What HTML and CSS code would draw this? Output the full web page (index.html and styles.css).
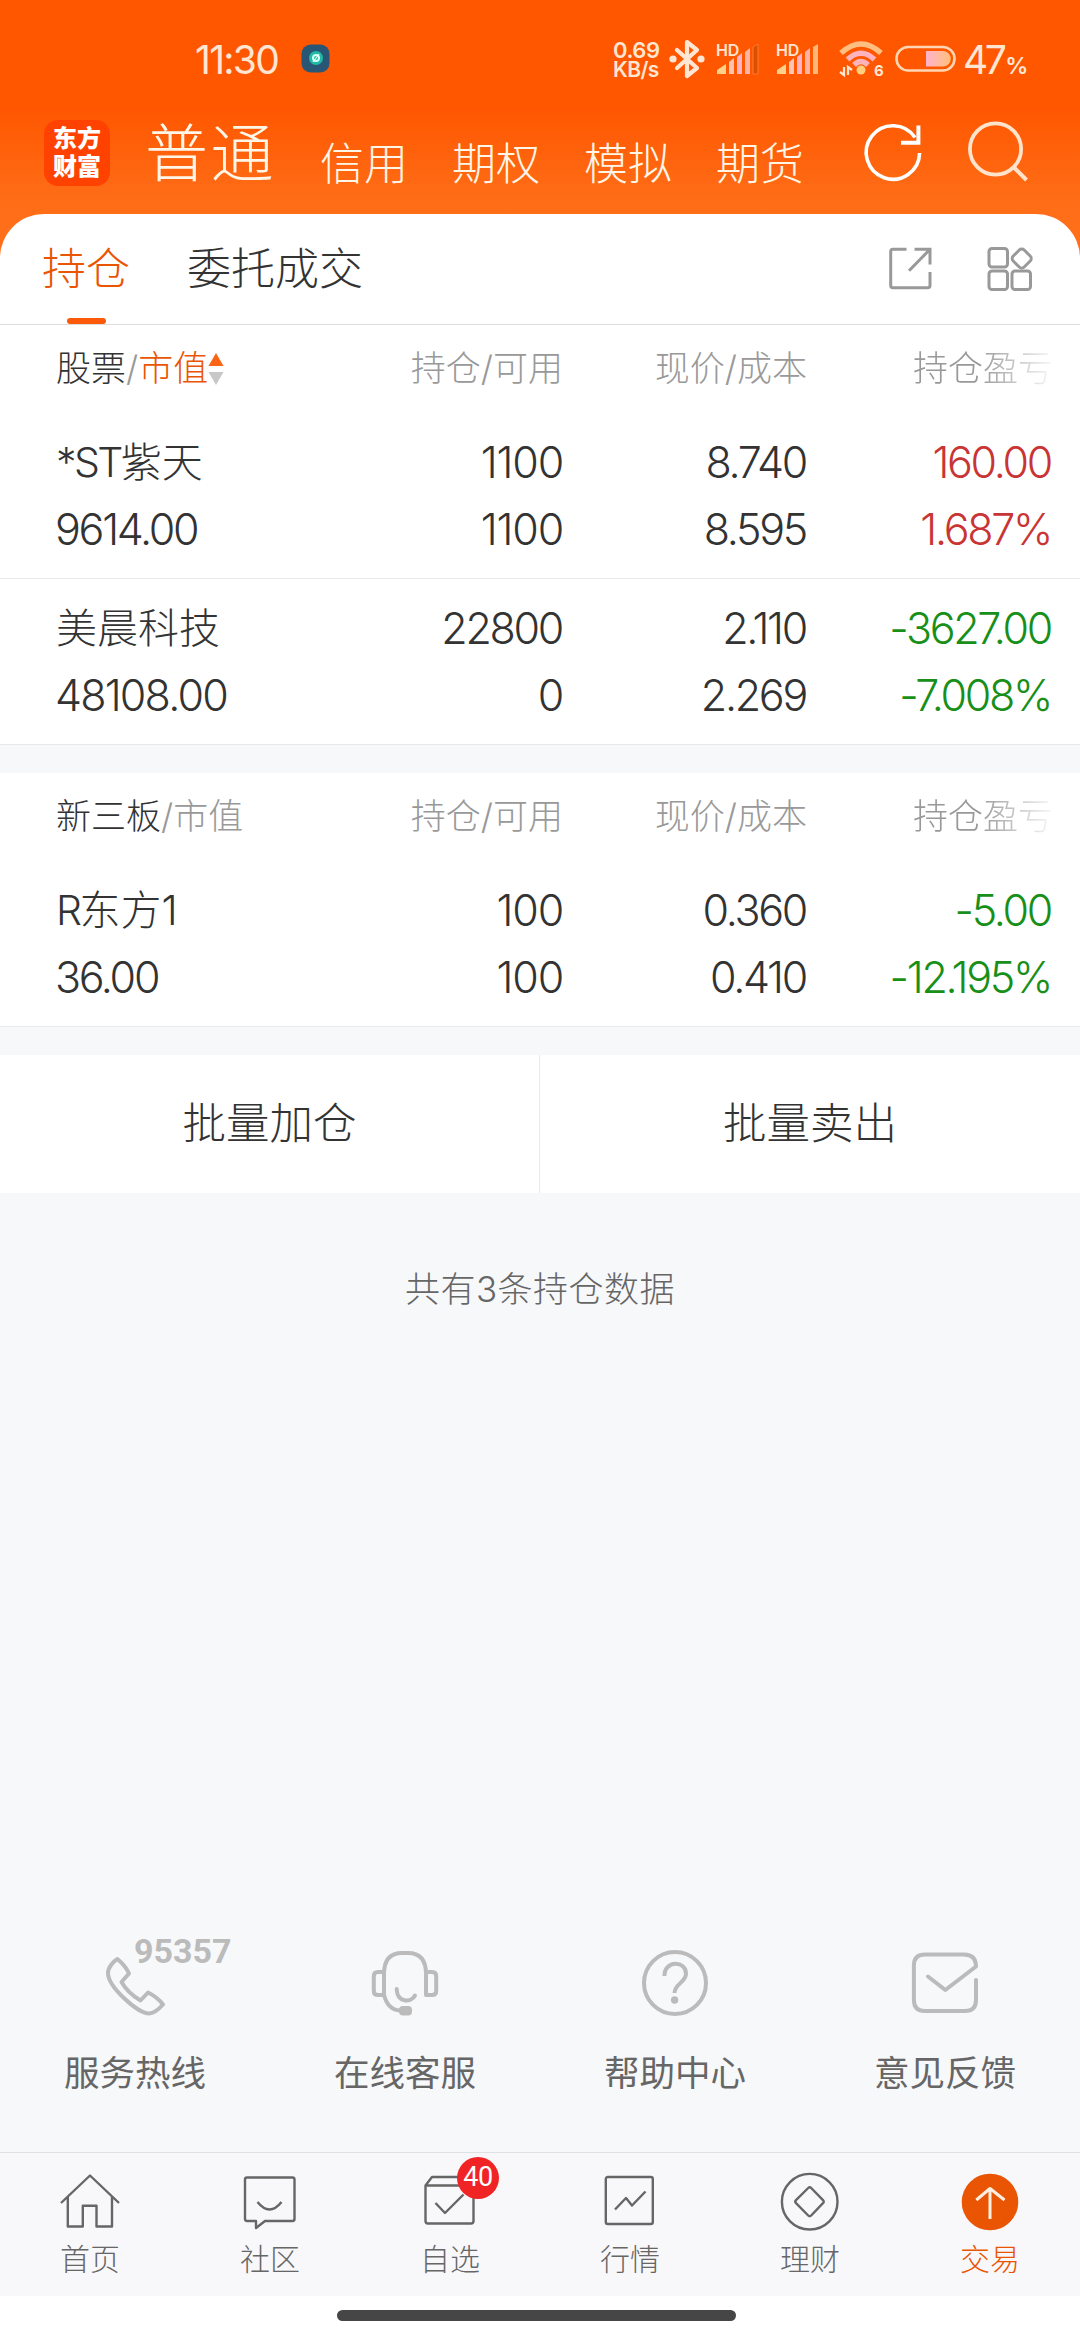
FILE: index.html
```html
<!DOCTYPE html>
<html lang="zh-CN">
<head>
<meta charset="utf-8">
<title>持仓</title>
<link rel="stylesheet" href="styles.css">
</head>
<body>
<div class="screen">
  <header class="top">
    <div class="status">
      <span class="time">11:30</span>
      <svg class="app-dot" viewBox="0 0 30 30" width="30" height="30"><rect x=".5" y=".5" width="28" height="28" rx="9" fill="#2a5675"/><circle cx="15" cy="14" r="7" fill="#1fb9a5"/><circle cx="15" cy="14" r="3" fill="none" stroke="#d8fff6" stroke-width="2"/><path d="M12 18l6-8" stroke="#d8fff6" stroke-width="1.2"/></svg>
      <span class="speed"><b>0.69</b><b class="unit">KB/s</b></span>
      <svg class="bt" viewBox="0 0 36 40" width="36" height="40"><path d="M8 11l20 18-10 8V3l10 8L8 29" fill="none" stroke="#ffe6d3" stroke-width="4.2" stroke-linejoin="round" stroke-linecap="round"/><circle cx="4" cy="20" r="3.6" fill="#ffe6d3"/><circle cx="32" cy="20" r="3.6" fill="#ffe6d3"/></svg>
      <span class="signal"><i>HD</i><svg viewBox="0 0 44 32" width="44" height="32"><path d="M1 31v-4l9-6v10z" fill="#ffd08a"/><path d="M13 31V19l5-4v16z" fill="#ffc3b4"/><path d="M21 31V14l5-4v21z" fill="#ffb3c4"/><path d="M29 31V9l5-4v26z" fill="#ffb3a4"/><path d="M37 31V4l5-3v30z" fill="#d85000" stroke="#ff7a30"/></svg></span>
      <span class="signal second"><i>HD</i><svg viewBox="0 0 44 32" width="44" height="32"><path d="M1 31v-4l9-6v10z" fill="#ffd08a"/><path d="M13 31V19l5-4v16z" fill="#ffc3b4"/><path d="M21 31V14l5-4v21z" fill="#ffb3c4"/><path d="M29 31V9l5-4v26z" fill="#ffb3a4"/><path d="M37 31V4l5-3v30z" fill="#ffb878"/></svg></span>
      <svg class="wifi" viewBox="0 0 44 36" width="44" height="36"><g fill="none" stroke-width="5.4"><path d="M2 12Q22-6 42 12" stroke="#ffbf80"/><path d="M8.500 18.500Q22 6 35.500 18.500" stroke="#ffb3c0"/><path d="M15 24Q22 17 29 24" stroke="#ffb3b8"/></g><circle cx="22" cy="29" r="4.500" fill="#ffcf80"/><path d="M5 26v8l-4-3M9 34v-8l4 3" fill="none" stroke="#ffe6d3" stroke-width="2.200"/><text x="35" y="35" class="wifi-gen">6</text></svg>
      <svg class="battery" viewBox="0 0 62 28" width="62" height="28"><defs><linearGradient id="charge"><stop offset="0" stop-color="#ffb3cc"/><stop offset="1" stop-color="#ffc078"/></linearGradient></defs><rect x="1.500" y="2" width="58" height="23.500" rx="11.700" fill="none" stroke="#ffd6b4" stroke-width="2.600"/><path d="M31 6h17a7.700 7.700 0 0 1 0 15.500H31z" fill="url(#charge)"/></svg>
      <span class="level">47<small>%</small></span>
    </div>
    <nav class="accounts">
      <span class="logo"><b>东方</b><b>财富</b></span>
      <span class="account current">普通</span>
      <span class="account">信用</span>
      <span class="account">期权</span>
      <span class="account">模拟</span>
      <span class="account">期货</span>
      <svg class="refresh" viewBox="0 0 60 60" width="60" height="60"><path d="M56.600 31A26.700 26.700 0 1 1 52 15.500" fill="none" stroke="#fff" stroke-width="3.600"/><path d="M55.400 3.500v17.200H38" fill="none" stroke="#fff" stroke-width="4"/></svg>
      <svg class="search" viewBox="0 0 62 62" width="62" height="62"><circle cx="28.500" cy="29" r="25.600" fill="none" stroke="#ffe3cc" stroke-width="3.800"/><path d="M46.500 47l13 13" stroke="#ffe3cc" stroke-width="4"/></svg>
    </nav>
  </header>

  <main class="panel">
    <div class="tabs">
      <span class="tab active">持仓</span>
      <span class="tab">委托成交</span>
      <svg class="share" viewBox="0 0 44 46" width="44" height="46"><path d="M17.500 3.300H4q-2.300 0-2.300 2.300V39.500q0 2.300 2.300 2.300H38.700q2.300 0 2.300-2.300V26M25.500 3.300H41V18.500M41 3.300L20 24.700" fill="none" stroke="#999" stroke-width="3"/></svg>
      <svg class="tiles" viewBox="0 0 46 46" width="46" height="46"><g fill="none" stroke="#999" stroke-width="3"><rect x="2" y="2.500" width="18.500" height="18.500" rx="3"/><rect x="2" y="25" width="18.500" height="18.500" rx="3"/><rect x="25" y="25" width="18.500" height="18.500" rx="3"/><rect x="27" y="4.800" width="15.500" height="15.500" rx="3.500" transform="rotate(45 34.750 12.500)"/></g></svg>
    </div>

    <section class="holdings">
      <div class="head">
        <span class="name"><em>股票</em>/<strong>市值</strong><svg class="sort" viewBox="0 0 16 32" width="16" height="32"><path d="M8 0l7.500 13H.5z" fill="#fa6414"/><path d="M8 32l7.500-13H.5z" fill="#c8c8c8"/></svg></span>
        <span>持仓/可用</span><span>现价/成本</span><span class="fade">持仓盈亏</span>
      </div>
      <div class="row">
        <div class="name"><p><i class="latin">*ST</i>紫天</p><p class="num">9614.00</p></div>
        <div class="num ones"><p>1100</p><p>1100</p></div>
        <div class="num"><p>8.740</p><p>8.595</p></div>
        <div class="num up"><p>160.00</p><p>1.687%</p></div>
      </div>
      <div class="row">
        <div class="name"><p>美晨科技</p><p class="num wide">48108.00</p></div>
        <div class="num"><p>22800</p><p>0</p></div>
        <div class="num"><p>2.110</p><p>2.269</p></div>
        <div class="num down"><p>-3627.00</p><p>-7.008%</p></div>
      </div>
    </section>

    <section class="holdings">
      <div class="head">
        <span class="name"><em>新三板</em>/市值</span>
        <span>持仓/可用</span><span>现价/成本</span><span class="fade">持仓盈亏</span>
      </div>
      <div class="row">
        <div class="name"><p><i class="latin">R</i>东方<i class="latin">1</i></p><p class="num">36.00</p></div>
        <div class="num ones"><p>100</p><p>100</p></div>
        <div class="num"><p>0.360</p><p>0.410</p></div>
        <div class="num down"><p>-5.00</p><p>-12.195%</p></div>
      </div>
    </section>

    <div class="batch"><span>批量加仓</span><span>批量卖出</span></div>
    <p class="total">共有3条持仓数据</p>
  </main>

  <section class="services">
    <div class="service">
      <svg viewBox="0 0 66 66" width="66" height="66"><path d="M15.400 9C19 12 24.500 18 27 23.500L19.500 32C24 40 31 46 38.500 50.500L46 42.500C51 45 57 49 61 54.500C57 59 52 63.500 47 63.500C36 63.500 6 37 6 23C6 17 12 11 15.400 9Z"/></svg>
      <b class="hotline">95357</b>
      <span>服务热线</span>
    </div>
    <div class="service">
      <svg viewBox="0 0 66 66" width="66" height="66"><path d="M12 45V24Q12 3 30 3H36Q54 3 54 24V45H60Q64.200 45 64.200 41V26Q64.200 22 60 22H54M12 22H6Q1.800 22 1.800 26V41Q1.800 45 6 45H12Q16 60 28 60.500M24.700 39C25 53 39 53 43 45.500"/><rect x="27" y="56" width="13" height="9.500" rx="4" class="mic"/></svg>
      <span>在线客服</span>
    </div>
    <div class="service">
      <svg viewBox="0 0 66 66" width="66" height="66"><circle cx="33" cy="33" r="31"/><path stroke-linecap="butt" d="M22.500 26C22 10 44.500 10 44 24C44 32 32.500 34 32.500 43"/><circle cx="32.600" cy="50" r="3.700" class="dot"/></svg>
      <span>帮助中心</span>
    </div>
    <div class="service">
      <svg viewBox="0 0 66 66" width="66" height="66"><path d="M16 26.500L33.300 40L64 16.500Q64 4.500 52 4.500H13Q1.900 4.500 1.900 15.500V50Q1.900 61 13 61H53Q64 61 64 50V30"/></svg>
      <span>意见反馈</span>
    </div>
  </section>

  <nav class="bottom">
    <span class="item"><svg viewBox="0 0 60 60" width="60" height="60"><path d="M1 31L30 3.500 59 31M7.800 25V54.500H22.800V33.700H36.500V54.500H52V25"/></svg>首页</span>
    <span class="item"><svg viewBox="0 0 60 60" width="60" height="60"><path d="M7 5.500H52.500q2 0 2 2V47q0 2-2 2H25L16 56V49H7q-2 0-2-2V7.500q0-2 2-2zM17.500 30Q29.600 45 41.500 30"/></svg>社区</span>
    <span class="item"><svg viewBox="0 0 60 60" width="60" height="60"><path d="M5.500 13.500H53.500V49q0 2.500-2.500 2.500H8q-2.500 0-2.500-2.500zL12 5H47L53.500 13.500M15.500 31L25 41 43.500 22.500"/></svg><b class="badge">40</b>自选</span>
    <span class="item"><svg viewBox="0 0 60 60" width="60" height="60"><rect x="5.800" y="5" width="47" height="47" rx="2"/><path d="M15 37.500L26 26 32 33.500 45.500 19.500"/></svg>行情</span>
    <span class="item"><svg viewBox="0 0 60 60" width="60" height="60"><circle cx="29.700" cy="29.700" r="27.800"/><path d="M28.200 16q1.500-1.500 3 0L43 28.200q1.500 1.500 0 3L31.200 43.500q-1.500 1.500-3 0L16 31.200q-1.500-1.500 0-3z"/></svg>理财</span>
    <span class="item on"><svg viewBox="0 0 60 60" width="60" height="60"><circle cx="30" cy="30" r="28.300" fill="#ea5504" stroke="none"/><path d="M30 47V16M16.300 28L30 16.500 44.500 28" stroke="#fff0e2" stroke-width="3"/></svg>交易</span>
  </nav>
  <div class="gesture"><i></i></div>
</div>
</body>
</html>
```
FILE: styles.css
```css
* { box-sizing: border-box; }
body { margin: 0; background: #fff; }
p { margin: 0; }
svg { display: block; flex: none; overflow: visible; }
em, i { font-style: normal; }
.screen {
  width: 1080px; height: 2340px; overflow: hidden;
  display: flex; flex-direction: column;
  font-family: Inter, "Noto Sans CJK SC", sans-serif;
  font-weight: 300; color: #333; background: #f7f8fa;
}
.top {
  height: 258px; margin-bottom: -44px; flex: none;
  background: linear-gradient(#ff5600 0, #ff5600 105px, #ff6d17 200px, #ff6f19 100%);
}
.status { height: 118px; display: flex; align-items: center; color: #ffe6d3; white-space: nowrap; }
.time { width: 106px; margin-left: 195px; font-size: 39px; font-weight: 400; letter-spacing: -1.7px; }
.app-dot { margin-right: 282px; }
.speed { width: 56px; display: flex; flex-direction: column; font-size: 22px; line-height: 19px; letter-spacing: -.5px; padding-top: 2px; }
.speed b { font-weight: 600; }
.speed .unit { font-size: 21px; letter-spacing: -.6px; }
.bt { margin-right: 11px; }
.signal { position: relative; width: 60px; }
.signal i { position: absolute; left: 0; top: 0; font-size: 16px; line-height: 14px; font-weight: 600; letter-spacing: -.3px; }
.signal.second { width: 63px; }
.wifi-gen { font-size: 15px; font-weight: 700; fill: #ffe6d3; }
.wifi { margin-right: 12px; }
.battery { margin-right: 6px; }
.level { font-size: 39px; font-weight: 400; letter-spacing: -3.5px; }
.level small { font-size: 23px; font-weight: 600; letter-spacing: 0; margin-left: 2px; }
.accounts { height: 69px; display: flex; align-items: center; color: #fff6e8; }
.logo {
  width: 66px; height: 66px; margin: 0 35px 0 44px; border-radius: 14px; background: #ff4200; color: #fff;
  display: flex; flex-direction: column; justify-content: center;
  font-size: 24px; line-height: 28px; text-align: center;
}
.logo b { font-weight: 900; }
.account { font-size: 44px; line-height: 66px; margin-right: 44px; padding-top: 22px; }
.account.current { font-size: 63px; letter-spacing: 2.5px; padding-top: 0; }
.refresh { margin: -1px 44px 0 15px; }
.search { margin-top: -3px; }

.panel { background: #fff; border-radius: 44px 44px 0 0; flex: none; }
.tabs { height: 111px; padding: 0 47px 0 42px; border-bottom: 1px solid #ddd; display: flex; align-items: flex-start; }
.tab { position: relative; font-size: 44px; line-height: 110px; margin-right: 57px; }
.tab.active { color: #ea5504; }
.tab.active::after { content: ""; position: absolute; left: 25px; bottom: 0; width: 39px; height: 6px; border-radius: 3px; background: #fa5a0a; }
.share { margin: 32px 54px 0 auto; }
.tiles { margin-top: 32px; }

.holdings { border-bottom: 28px solid #f7f8fa; }
.head, .row { display: grid; grid-template-columns: 264px 243px 244px 246px; padding-left: 56px; text-align: right; white-space: nowrap; }
.head { height: 87px; line-height: 87px; font-size: 35px; color: #999; }
.head .name { display: flex; align-items: center; }
.head em { color: #333; }
.head strong { color: #ea5504; font-weight: 300; }
.fade { -webkit-mask-image: linear-gradient(90deg, #000 70%, transparent 102%); mask-image: linear-gradient(90deg, #000 70%, transparent 102%); }
.row { height: 167px; margin-top: -1px; padding-top: 17px; border-bottom: 1px solid #e8e9eb; font-size: 41px; line-height: 67px; }
.head + .row { margin-top: 0; }
.name { text-align: left; }
.name .num { margin-left: -1px; }
.latin { letter-spacing: -2.6px; }
.num { font-size: 43px; letter-spacing: -2.3px; padding-right: 1px; }
.num.wide { letter-spacing: -1.8px; }
.num.ones { letter-spacing: -1.2px; padding-right: 0; }
.row > .num:nth-child(4) { padding-right: 2px; }
.up { color: #c93434; }
.down { color: #188f18; }

.batch { height: 138px; display: grid; grid-template-columns: 540px 540px; line-height: 136px; font-size: 43.500px; text-align: center; }
.batch span:first-child { border-right: 1px solid #e8e9eb; }
.total { background: #f7f8fa; color: #666; font-size: 35px; letter-spacing: .5px; line-height: 50px; padding-top: 71px; text-align: center; }

.services { margin-top: auto; height: 202px; flex: none; display: grid; grid-template-columns: repeat(4, 1fr); }
.service { position: relative; display: flex; flex-direction: column; align-items: center; font-size: 35.500px; line-height: 50px; color: #666; font-weight: 400; }
.service svg { margin-bottom: 33px; fill: none; stroke: #bbb; stroke-width: 4; stroke-linejoin: round; stroke-linecap: round; }
.service .mic, .service .dot { fill: #bbb; stroke: none; }
.hotline { position: absolute; left: 134px; top: -12px; font-family: Roboto, sans-serif; font-weight: 700; font-size: 34px; line-height: 26px; color: #bbb; }

.bottom { height: 144px; flex: none; border-top: 1px solid #dfe0e2; background: #f8f8fa; display: grid; grid-template-columns: repeat(6, 1fr); }
.item { position: relative; display: flex; flex-direction: column; align-items: center; padding-top: 19px; font-size: 30px; line-height: 40px; color: #666; }
.item svg { margin-bottom: 7px; fill: none; stroke: #666; stroke-width: 2.400; stroke-linejoin: round; }
.item.on { color: #ea5504; }
.badge { position: absolute; left: 97px; top: 4px; width: 42px; height: 42px; border-radius: 50%; background: #f02424; color: #fff; font: 400 27px/41px Roboto, sans-serif; text-align: center; letter-spacing: -.5px; }
.gesture { height: 44px; flex: none; background: #fff; padding: 14px 0 0 337px; }
.gesture i { display: block; width: 399px; height: 11px; border-radius: 6px; background: #464646; }
```
